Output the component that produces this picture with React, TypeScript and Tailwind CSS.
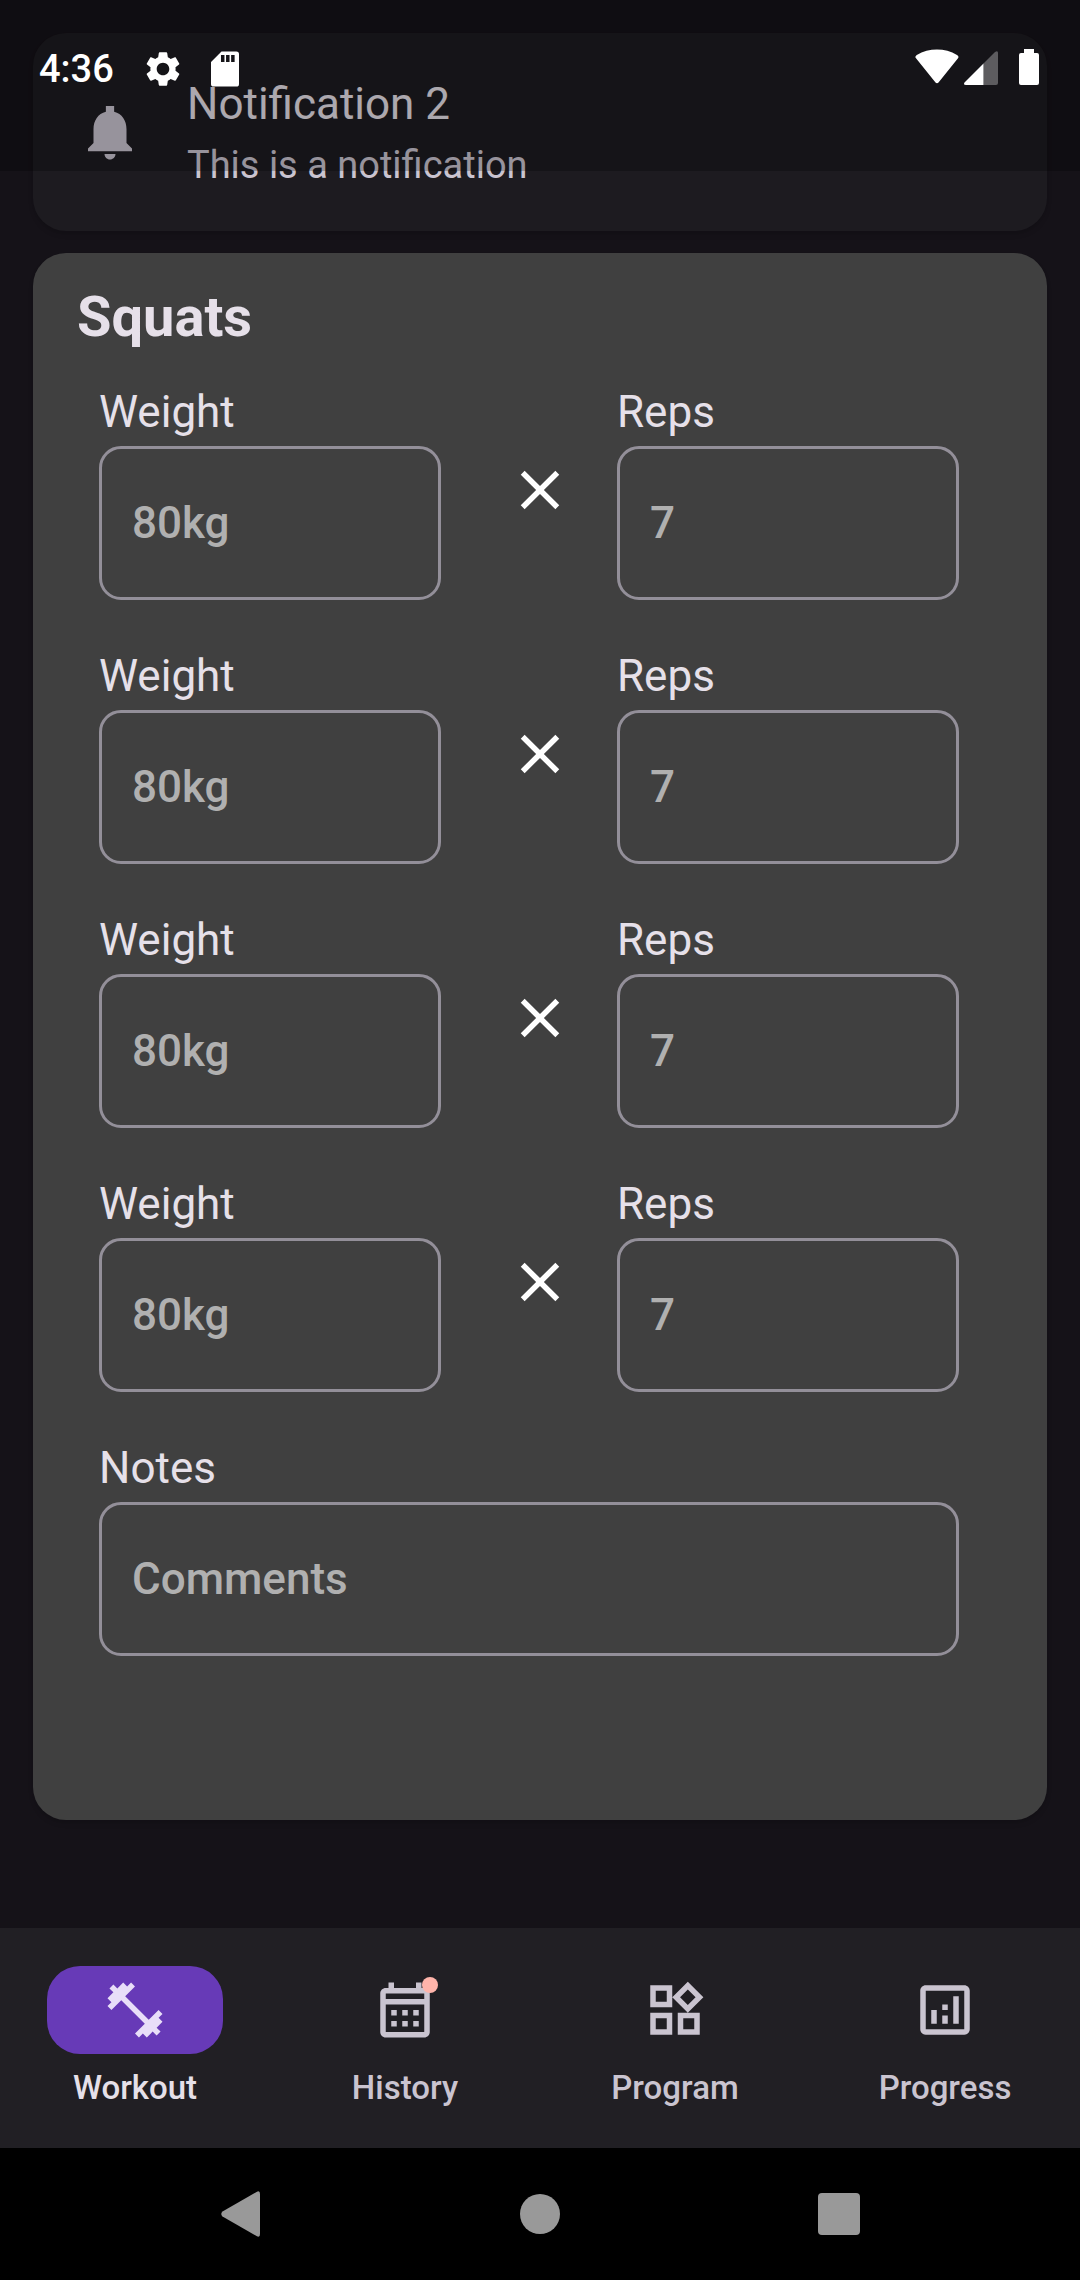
import React, { useState } from "react";
import type { ReactNode } from "react";

const CloseIcon = () => (
  <svg viewBox="0 0 24 24" className="size-[66px] fill-white" aria-hidden="true">
    <path d="M19 6.41 17.59 5 12 10.59 6.41 5 5 6.41 10.59 12 5 17.59 6.41 19 12 13.41 17.59 19 19 17.59 13.41 12z" />
  </svg>
);

const BellIcon = () => (
  <svg viewBox="0 0 24 24" className="size-[66px] shrink-0 fill-[#cac4d0]" aria-hidden="true">
    <path d="M12 22c1.1 0 2-.9 2-2h-4c0 1.1.89 2 2 2zm6-6v-5c0-3.07-1.63-5.64-4.5-6.32V2.5h-3v2.18C7.64 5.36 6 7.92 6 11v5l-2 2v1h16v-1l-2-2z" />
  </svg>
);

const NavIcon = ({ children }: { children: ReactNode }) => (
  <svg viewBox="0 0 24 24" className="size-[66px] fill-current" fillRule="evenodd" aria-hidden="true">
    {children}
  </svg>
);

const tabs: { label: string; icon: ReactNode; badge?: boolean }[] = [
  {
    label: "Workout",
    icon: (
      <path d="M20.57 14.86 22 13.43 20.57 12 17 15.57 8.43 7 12 3.43 10.57 2 9.14 3.43 7.71 2 5.57 4.14 4.14 2.71 2.71 4.14l1.43 1.43L2 7.71l1.43 1.43L2 10.57 3.43 12 7 8.43 15.57 17 12 20.57 13.43 22l1.43-1.43L16.29 22l2.14-2.14 1.43 1.43 1.43-1.43-1.43-1.43L22 16.29z" />
    ),
  },
  {
    label: "History",
    badge: true,
    icon: (
      <path d="M19 4h-1V2h-2v2H8V2H6v2H5c-1.11 0-2 .9-2 2v14c0 1.1.89 2 2 2h14c1.1 0 2-.9 2-2V6c0-1.1-.9-2-2-2zm0 16H5V10h14v10zm0-12H5V6h14v2zM7 12h2v2H7zm4 0h2v2h-2zm4 0h2v2h-2zM7 16h2v2H7zm4 0h2v2h-2zm4 0h2v2h-2z" />
    ),
  },
  {
    label: "Program",
    icon: (
      <path d="m16.66 4.52 2.83 2.83-2.83 2.83-2.83-2.83 2.83-2.83M9 5v4H5V5h4m10 10v4h-4v-4h4M9 15v4H5v-4h4m7.66-13.31L11 7.34 16.66 13l5.66-5.66-5.66-5.65zM11 3H3v8h8V3zm10 10h-8v8h8v-8zm-10 0H3v8h8v-8z" />
    ),
  },
  {
    label: "Progress",
    icon: (
      <path d="M19 3H5c-1.1 0-2 .9-2 2v14c0 1.1.9 2 2 2h14c1.1 0 2-.9 2-2V5c0-1.1-.9-2-2-2zm0 16H5V5h14v14zM7 12h2v5H7zM15 7h2v10h-2zM11 14h2v3h-2zM11 10h2v2h-2z" />
    ),
  },
];

function StatusBar() {
  return (
    <header className="absolute inset-x-0 top-0 flex h-[171px] items-start justify-between bg-black/25 pt-11 pr-[41px] pl-[39px]">
      <div className="flex items-center">
        <span className="text-[38px] leading-[50px] font-medium text-white">4:36</span>
        <svg viewBox="0 0 24 24" className="ml-7 size-[42px] fill-white" aria-hidden="true">
          <path d="M19.14 12.94c.04-.3.06-.61.06-.94 0-.32-.02-.64-.07-.94l2.03-1.58c.18-.14.23-.41.12-.61l-1.92-3.32c-.12-.22-.37-.29-.59-.22l-2.39.96c-.5-.38-1.03-.7-1.62-.94l-.36-2.54c-.04-.24-.24-.41-.48-.41h-3.84c-.24 0-.43.17-.47.41l-.36 2.54c-.59.24-1.13.57-1.62.94l-2.39-.96c-.22-.08-.47 0-.59.22L2.74 8.87c-.12.21-.08.47.12.61l2.03 1.58c-.05.3-.09.63-.09.94s.02.64.07.94l-2.03 1.58c-.18.14-.23.41-.12.61l1.92 3.32c.12.22.37.29.59.22l2.39-.96c.5.38 1.03.7 1.62.94l.36 2.54c.05.24.24.41.48.41h3.84c.24 0 .44-.17.47-.41l.36-2.54c.59-.24 1.13-.56 1.62-.94l2.39.96c.22.08.47 0 .59-.22l1.92-3.32c.12-.22.07-.47-.12-.61l-2.01-1.58zM12 15.6c-1.98 0-3.6-1.62-3.6-3.6s1.62-3.6 3.6-3.6 3.6 1.62 3.6 3.6-1.62 3.6-3.6 3.6z" />
        </svg>
        <svg viewBox="0 0 24 24" className="ml-5 size-[42px] fill-white" fillRule="evenodd" aria-hidden="true">
          <path d="M18.500 2H10L4 8v12.500Q4 22 5.500 22h13q1.500 0 1.500-1.500v-17Q20 2 18.500 2zM9.700 4h2v4h-2zM12.600 4h2v4h-2zM15.500 4h2v4h-2z" />
        </svg>
      </div>
      <div className="flex h-[41px] items-end">
        <svg viewBox="0 0 44 36" className="h-9 w-11 fill-white" aria-hidden="true">
          <path d="M1.200 9.500C-.2 8 .3 7 1.800 6C14-1.200 30-1.200 42 6C43.500 7 44 8 42.800 9.500L23.500 33.500Q22 35 20.500 33.500Z" />
        </svg>
        <svg viewBox="0 0 34 34" className="ml-[5px] size-[34px]" aria-hidden="true">
          <path d="M19.500 12.500 31 1q3-2 3 1v30q0 2-2 2H19.500z" className="fill-[#5d5c5f]" />
          <path d="M19.500 12.500V34H2q-3 0-1.500-2.500z" className="fill-white" />
        </svg>
        <svg viewBox="0 0 20 36" className="ml-[21px] h-9 w-5 fill-white" aria-hidden="true">
          <path d="M5 0h10v4h3q2 0 2 2v28q0 2-2 2H2q-2 0-2-2V6q0-2 2-2h3z" />
        </svg>
      </div>
    </header>
  );
}

function Field({ id, label, placeholder }: { id: string; label: string; placeholder: string }) {
  return (
    <div className="flex min-w-0 flex-1 flex-col gap-0.5">
      <label htmlFor={id} className="text-[44px] leading-16 text-[#e6e0e9]">
        {label}
      </label>
      <input
        id={id}
        type="text"
        placeholder={placeholder}
        className="h-[154px] w-full rounded-[22px] border-[3px] border-[#938f99] bg-transparent px-[30px] text-[44px] font-medium text-[#e6e0e9] outline-none placeholder:text-[#b0b0b0]"
      />
    </div>
  );
}

function ExerciseCard() {
  return (
    <section className="mt-[22px] rounded-[33px] bg-[#404040] pt-[26px] pr-[88px] pb-[164px] pl-[66px] shadow-md">
      <h1 className="-ml-[22px] text-[56px] leading-[77px] font-bold text-[#e6e0e9]">Squats</h1>
      <div className="mt-6 flex flex-col gap-11">
        {[1, 2, 3, 4].map((set) => (
          <div key={set} className="flex items-center">
            <Field id={`weight-${set}`} label="Weight" placeholder="80kg" />
            <div className="flex w-[176px] shrink-0 justify-center pl-[22px]">
              <CloseIcon />
            </div>
            <Field id={`reps-${set}`} label="Reps" placeholder="7" />
          </div>
        ))}
        <Field id="notes" label="Notes" placeholder="Comments" />
      </div>
    </section>
  );
}

function BottomNav() {
  const [active, setActive] = useState("Workout");
  return (
    <nav className="grid grid-cols-4 bg-[#211f24] pt-[38px] pb-[38px]">
      {tabs.map(({ label, icon, badge }) => {
        const on = active === label;
        return (
          <button
            key={label}
            type="button"
            aria-current={on ? "page" : undefined}
            onClick={() => setActive(label)}
            className="flex flex-col items-center gap-3"
          >
            <span
              className={
                on
                  ? "flex h-[88px] w-[176px] items-center justify-center rounded-[33px] bg-[#673ab7] text-[#e8def8]"
                  : "flex h-[88px] w-[176px] items-center justify-center text-[#cac4d0]"
              }
            >
              <span className="relative">
                <NavIcon>{icon}</NavIcon>
                {badge && <span className="absolute top-0 right-0 size-4 rounded-full bg-[#ffb4ab]" />}
              </span>
            </span>
            <span
              className={
                on
                  ? "text-[33px] leading-11 font-medium text-[#e6e0e9]"
                  : "text-[33px] leading-11 font-medium text-[#cac4d0]"
              }
            >
              {label}
            </span>
          </button>
        );
      })}
    </nav>
  );
}

function SystemNav() {
  return (
    <div className="flex h-[132px] bg-black px-[91px]">
      <button type="button" aria-label="Back" className="flex flex-1 items-center justify-center">
        <svg viewBox="0 0 40 46" className="h-[46px] w-10 fill-[#999]" aria-hidden="true">
          <path d="M35.500 1Q39 -1 39 3V43Q39 47 35.500 45L1.500 25.500Q-1 23 1.500 20.500Z" />
        </svg>
      </button>
      <button type="button" aria-label="Home" className="flex flex-1 items-center justify-center">
        <span className="size-10 rounded-full bg-[#999]" />
      </button>
      <button type="button" aria-label="Recents" className="flex flex-1 items-center justify-center">
        <span className="size-[42px] rounded-[4px] bg-[#999]" />
      </button>
    </div>
  );
}

export default function App() {
  return (
    <div className="relative flex min-h-screen flex-col bg-[#151218] font-['Roboto',sans-serif]">
      <main className="flex-1 px-[33px] pt-[33px]">
        <article className="flex h-[198px] items-center gap-11 rounded-[33px] bg-[#1d1b20] px-11 shadow-md">
          <BellIcon />
          <div className="flex flex-col gap-0.5">
            <h2 className="text-[44px] leading-16 text-[#e6e0e9]">Notification 2</h2>
            <p className="text-[38px] leading-[55px] text-[#cac4d0]">This is a notification</p>
          </div>
        </article>
        <ExerciseCard />
      </main>
      <BottomNav />
      <SystemNav />
      <StatusBar />
    </div>
  );
}
